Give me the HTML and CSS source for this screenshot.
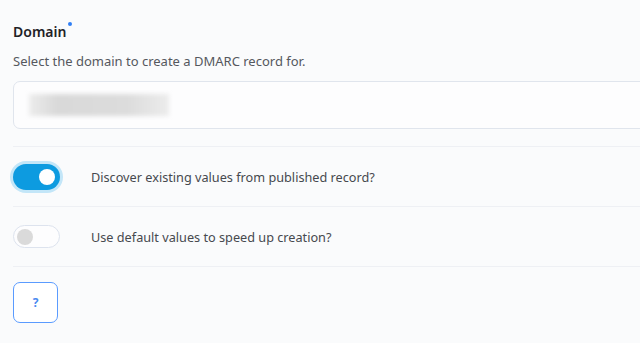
FILE: index.html
```html
<!DOCTYPE html>
<html lang="en">

<head>
    <meta charset="UTF-8">
    <meta name="viewport" content="width=device-width, initial-scale=1.0">
    <title>DMARC domain</title>
    <link rel="stylesheet" href="styles.css">
</head>

<body>
    <div class="form">
        <div class="field">
            <label class="field-title">Domain<span class="req"></span></label>
            <p class="field-help">Select the domain to create a DMARC record for.</p>
            <div class="select-box">
                <span class="blurred"></span>
            </div>
        </div>

        <div class="option-row">
            <span class="switch switch-on"><span class="knob"></span></span>
            <span class="option-label">Discover existing values from published record?</span>
        </div>

        <div class="option-row">
            <span class="switch"><span class="knob"></span></span>
            <span class="option-label">Use default values to speed up creation?</span>
        </div>

        <div class="actions">
            <button class="help-btn">?</button>
        </div>
    </div>
</body>

</html>
```

FILE: styles.css
```css
html, body {
    margin: 0;
    background-color: #fafbfc;
    overflow: hidden;
}

body {
    font-family: "Noto Sans", "Open Sans", sans-serif;
    color: #3c3f44;
}

.form {
    width: 700px;
    padding: 0 0 0 13px;
}

.field {
    padding-top: 20px;
    padding-bottom: 17px;
}

.field-title {
    display: inline-block;
    position: relative;
    font-size: 14px;
    font-weight: 600;
    color: #1f2227;
    line-height: 20px;
}

.req {
    position: absolute;
    right: -6px;
    top: 0;
    width: 4px;
    height: 4px;
    border-radius: 50%;
    background-color: #2f7ff5;
}

.field-help {
    margin: 10px 0 11px;
    font-size: 13px;
    line-height: 18px;
    color: #55585e;
}

.select-box {
    height: 46px;
    border: 1px solid #e0e5ed;
    border-radius: 7px;
    background-color: #fdfdfe;
    display: flex;
    align-items: center;
    padding-left: 15px;
}

.blurred {
    display: block;
    width: 140px;
    height: 22px;
    background: linear-gradient(90deg, #ececec, #d9d9d9 20%, #dcdcdc 70%, #ececec);
    filter: blur(2px);
}

.option-row {
    box-sizing: border-box;
    display: flex;
    align-items: center;
    height: 60px;
    border-top: 1px solid #eef0f4;
}

.switch {
    box-sizing: border-box;
    width: 47px;
    height: 23px;
    border-radius: 12px;
    border: 1px solid #dde3ee;
    background-color: #fdfdfe;
    display: flex;
    align-items: center;
    padding: 0 3px;
    flex-shrink: 0;
}

.switch .knob {
    width: 16px;
    height: 16px;
    border-radius: 50%;
    background-color: #dadada;
}

.switch-on {
    height: 26px;
    border-radius: 13px;
    border: none;
    background-color: #0d9be0;
    justify-content: flex-end;
    padding-right: 5px;
    box-shadow: 0 0 0 3px #c3e6f8;
}

.switch-on .knob {
    background-color: #fff;
}

.option-label {
    margin-left: 31px;
    font-size: 12.7px;
    color: #46494e;
}

.actions {
    border-top: 1px solid #eef0f4;
    padding-top: 15px;
}

.help-btn {
    width: 45px;
    height: 41px;
    border: 1.5px solid #5a9bff;
    border-radius: 7px;
    background-color: #fff;
    color: #4a8af0;
    font-family: "Noto Sans", sans-serif;
    font-size: 12px;
    font-weight: 700;
    cursor: pointer;
}
```
